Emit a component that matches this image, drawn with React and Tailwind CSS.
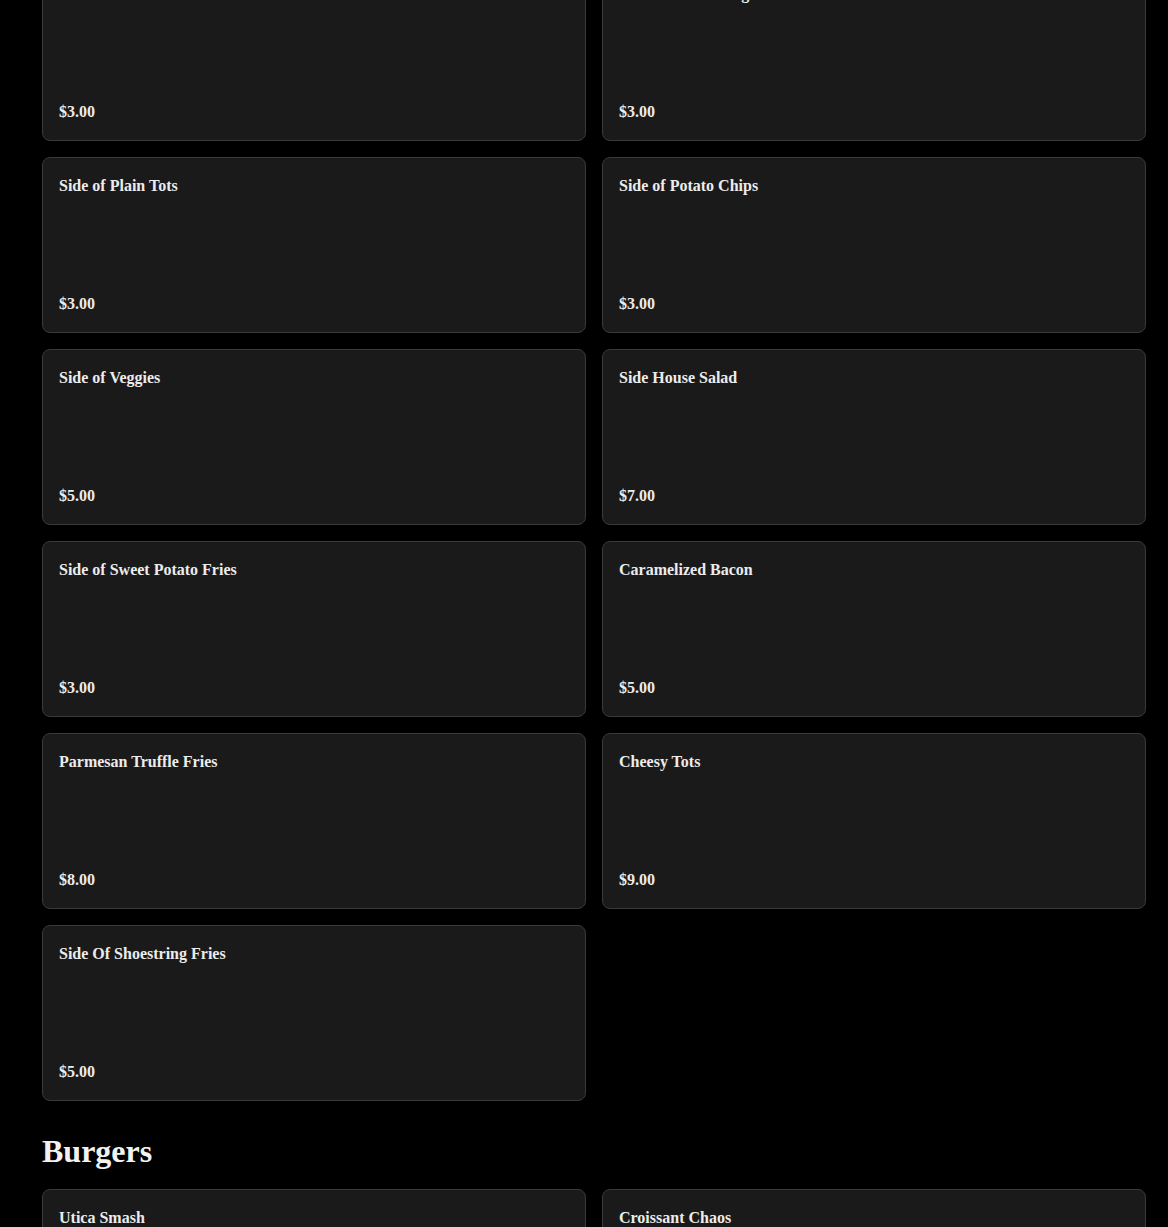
import React from 'react';

// Menu sections — page is shown scrolled partway into "Sides"
const sides = [
  { name: 'Side of Seasoned Fries', price: '$3.00' },
  { name: 'Side of Onion Rings', price: '$3.00' },
  { name: 'Side of Plain Tots', price: '$3.00' },
  { name: 'Side of Potato Chips', price: '$3.00' },
  { name: 'Side of Veggies', price: '$5.00' },
  { name: 'Side House Salad', price: '$7.00' },
  { name: 'Side of Sweet Potato Fries', price: '$3.00' },
  { name: 'Caramelized Bacon', price: '$5.00' },
  { name: 'Parmesan Truffle Fries', price: '$8.00' },
  { name: 'Cheesy Tots', price: '$9.00' },
  { name: 'Side Of Shoestring Fries', price: '$5.00' },
];

const burgers = [
  { name: 'Utica Smash', price: '$12.00' },
  { name: 'Croissant Chaos', price: '$14.00' },
];

const MenuCard = ({ item }) => (
  <div className="flex h-[176px] flex-col justify-between rounded-lg border border-[#3a3a3a] bg-[#1a1a1a] px-4 pt-[18px] pb-[18px]">
    <h3 className="text-[16px] font-bold leading-5 text-[#ececec]">{item.name}</h3>
    <p className="text-[16px] font-bold leading-5 text-[#ececec] [font-variant-numeric:oldstyle-nums]">
      {item.price}
    </p>
  </div>
);

const App = () => {
  return (
    <div
      className="min-h-screen overflow-hidden bg-black pl-[42px] pr-[22px]"
      style={{ fontFamily: "Georgia, 'Liberation Serif', 'DejaVu Serif', serif" }}
    >
      <div className="-mt-[35px]">
        {/* Sides */}
        <div className="grid grid-cols-2 gap-4">
          {sides.map((item) => (
            <MenuCard key={item.name} item={item} />
          ))}
        </div>

        {/* Burgers */}
        <h2 className="mt-8 mb-5 text-[32px] font-bold leading-9 text-[#f2f2f2]">Burgers</h2>
        <div className="grid grid-cols-2 gap-4">
          {burgers.map((item) => (
            <MenuCard key={item.name} item={item} />
          ))}
        </div>
      </div>
    </div>
  );
};

export default App;
